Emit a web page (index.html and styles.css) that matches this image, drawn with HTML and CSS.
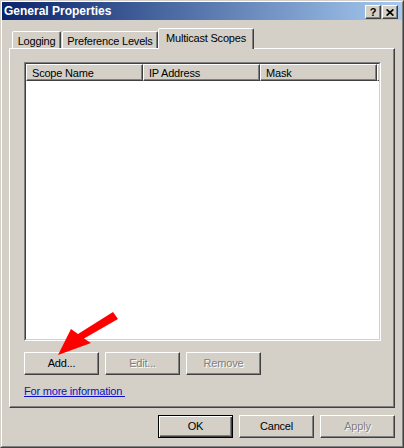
FILE: index.html
```html
<!DOCTYPE html>
<html>
<head>
<meta charset="utf-8">
<link rel="stylesheet" href="styles.css">
</head>
<body>
<div class="window">
  <div class="frame">
    <div class="titlebar">
      <span class="title">General Properties</span>
      <div class="capbtns">
        <div class="capbtn help">?</div>
        <div class="capbtn">
          <svg width="8" height="7" viewBox="0 0 8 7"><path d="M0.6 0.4 L7.4 6.6 M7.4 0.4 L0.6 6.6" stroke="#000" stroke-width="1.7" fill="none"/></svg>
        </div>
      </div>
    </div>
    <div class="tabs">
      <div class="tab t-log">Logging</div>
      <div class="tab t-pref">Preference Levels</div>
      <div class="tab t-multi active">Multicast Scopes</div>
    </div>
    <div class="panel">
      <div class="list">
        <div class="list-in">
          <div class="header">
            <div class="hcell">Scope Name</div>
            <div class="hcell">IP Address</div>
            <div class="hcell">Mask</div>
            <div class="hcell hfill"></div>
          </div>
        </div>
      </div>
      <div class="btnrow">
        <div class="btn">Add...</div>
        <div class="btn dis">Edit...</div>
        <div class="btn dis">Remove</div>
      </div>
      <div class="morerow"><span class="more">For more information&nbsp;</span></div>
    </div>
    <div class="footer">
      <div class="btn default">OK</div>
      <div class="btn">Cancel</div>
      <div class="btn dis">Apply</div>
    </div>
  </div>
  <svg class="arrow" width="404" height="448" viewBox="0 0 404 448">
    <polygon points="58,355 71,329 78,334 113,312 118,319 84,338.5 91,343" fill="#ff0000"/>
  </svg>
</div>
</body>
</html>
```
FILE: styles.css
```css
body {
  margin: 0;
  background: #d4d0c8;
  font-family: "Liberation Sans", Arial, sans-serif;
  font-size: 11px;
  line-height: 13px;
  letter-spacing: -0.2px;
  color: #000;
}
.window {
  position: relative;
  width: 404px;
  height: 448px;
  box-sizing: border-box;
  border: 1px solid;
  border-color: #d4d0c8 #404040 #404040 #d4d0c8;
  overflow: hidden;
}
.frame {
  height: 100%;
  box-sizing: border-box;
  border: 1px solid;
  border-color: #fff #808080 #808080 #fff;
}
.titlebar {
  height: 18px;
  background: linear-gradient(to right, #0a246a, #a6caf0);
  display: flex;
  justify-content: space-between;
  align-items: flex-start;
  padding: 0 4px 0 2px;
}
.title {
  color: #fff;
  font-weight: bold;
  font-size: 12px;
  letter-spacing: 0;
  line-height: 18px;
}
.capbtns {
  display: flex;
  gap: 1px;
  margin-top: 3px;
}
.capbtn {
  width: 16px;
  height: 14px;
  box-sizing: border-box;
  border: 1px solid;
  border-color: #fff #404040 #404040 #fff;
  box-shadow: inset -1px -1px #808080;
  background: #d4d0c8;
  display: flex;
  align-items: center;
  justify-content: center;
}
.help {
  font-weight: bold;
  font-size: 11px;
  line-height: 11px;
  letter-spacing: 0;
}
.tabs {
  display: flex;
  align-items: flex-end;
  margin: 8px 0 0 10px;
}
.tab {
  box-sizing: border-box;
  height: 17px;
  padding-top: 3px;
  text-align: center;
  border: 1px solid;
  border-bottom: none;
  border-color: #fff #404040 transparent #fff;
  box-shadow: inset -1px 0 #808080;
  border-radius: 2px 2px 0 0;
  background: #d4d0c8;
  white-space: nowrap;
}
.t-log { width: 49px; margin-right: 1px; }
.t-pref { width: 96px; }
.t-multi { width: 96px; }
.tab.active {
  height: 21px;
  margin-bottom: -1px;
  position: relative;
  z-index: 1;
}
.panel {
  margin-left: 7px;
  width: 386px;
  height: 360px;
  box-sizing: border-box;
  border: 1px solid;
  border-color: #fff #404040 #404040 #fff;
  box-shadow: inset -1px -1px #808080;
  padding: 13px 0 0 14px;
}
.list {
  width: 357px;
  height: 279px;
  box-sizing: border-box;
  border: 1px solid;
  border-color: #808080 #fff #fff #808080;
}
.list-in {
  height: 100%;
  box-sizing: border-box;
  border: 1px solid;
  border-color: #404040 #d4d0c8 #d4d0c8 #404040;
  background: #fff;
}
.header {
  display: flex;
  height: 17px;
}
.hcell {
  width: 117px;
  box-sizing: border-box;
  border-top: 1px solid #fff;
  border-left: 1px solid #fff;
  border-right: 1px solid #404040;
  border-bottom: 1px solid #404040;
  box-shadow: inset -1px -1px #808080;
  padding: 2px 0 0 5px;
  background: #d4d0c8;
  white-space: nowrap;
}
.hfill {
  width: auto;
  flex: 1;
  padding: 0;
  border-right: none;
  box-shadow: none;
}
.btnrow {
  display: flex;
  gap: 6px;
  margin-top: 11px;
}
.btn {
  width: 75px;
  height: 23px;
  box-sizing: border-box;
  border: 1px solid;
  border-color: #fff #404040 #404040 #fff;
  box-shadow: inset -1px -1px #808080;
  background: #d4d0c8;
  display: flex;
  align-items: center;
  justify-content: center;
}
.btn.default {
  border: 1px solid #000;
  box-shadow: inset 1px 1px #fff, inset -1px -1px #404040, inset -2px -2px #808080;
}
.btn.dis {
  color: #808080;
  text-shadow: 1px 1px #fff;
}
.morerow {
  margin-top: 10px;
}
.more {
  color: #0a10c8;
  text-decoration: underline;
}
.footer {
  display: flex;
  justify-content: flex-end;
  gap: 6px;
  margin: 7px 7px 0 0;
}
.arrow {
  position: absolute;
  left: -1px;
  top: -1px;
  pointer-events: none;
}
```
